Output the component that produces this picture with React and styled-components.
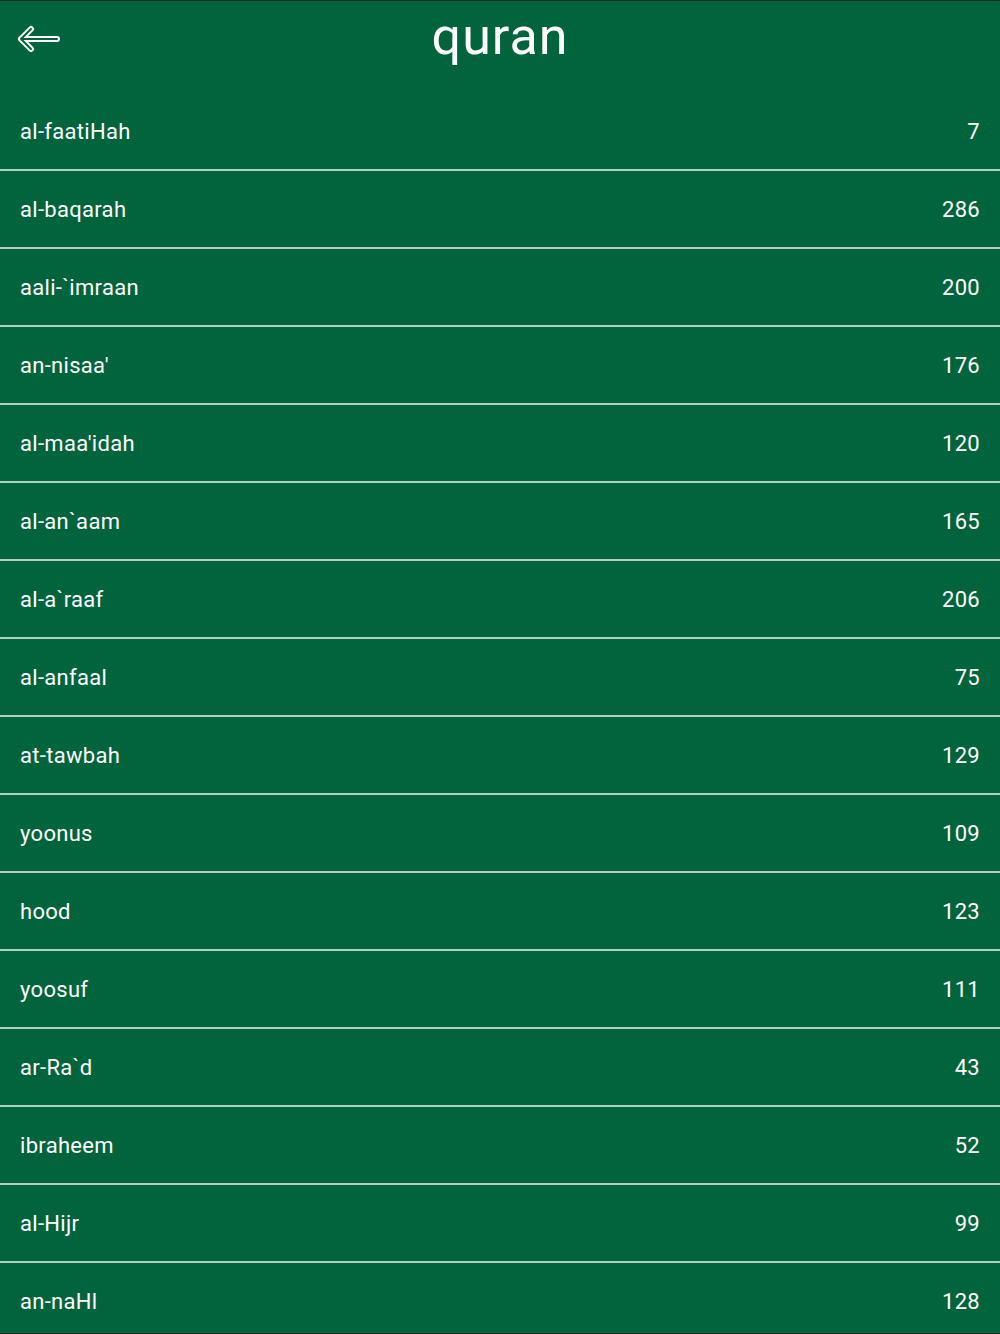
import React from 'react';
import styled, { createGlobalStyle } from 'styled-components';

const GlobalStyle = createGlobalStyle`
  html, body {
    margin: 0;
    padding: 0;
    background: #02643c;
  }
  body {
    font-family: Roboto, "Noto Sans", sans-serif;
  }
`;

const Page = styled.div`
  width: 1000px;
  height: 1334px;
  overflow: hidden;
  background: #02643c;
  border-top: 1px solid #0d2a1c;
  border-bottom: 1px solid #0d2a1c;
  box-sizing: border-box;
  display: flex;
  flex-direction: column;
`;

const Header = styled.header`
  height: 92px;
  padding-bottom: 16px;
  box-sizing: border-box;
  display: grid;
  grid-template-columns: 80px 1fr 80px;
  align-items: center;
  flex-shrink: 0;
`;

const BackButton = styled.button`
  background: none;
  border: none;
  padding: 0 0 0 17px;
  display: flex;
  align-items: center;
  cursor: pointer;
`;

const Title = styled.h1`
  margin: 0;
  text-align: center;
  color: #fff;
  font-size: 52px;
  font-weight: 400;
  letter-spacing: 1px;
  line-height: 1;
  padding-bottom: 4px;
`;

const List = styled.ul`
  list-style: none;
  margin: 0;
  padding: 0;
`;

const Row = styled.li`
  height: 76px;
  display: flex;
  align-items: center;
  justify-content: space-between;
  padding: 0 20px;
  border-bottom: 2px solid #b4d0bd;
  color: #fff;
  font-size: 22px;
  letter-spacing: 0.3px;

  &:last-child {
    border-bottom: none;
  }
`;

const Count = styled.span`
  text-align: right;
`;

const surahs = [
  ['al-faatiHah', 7],
  ['al-baqarah', 286],
  ['aali-`imraan', 200],
  ["an-nisaa'", 176],
  ["al-maa'idah", 120],
  ['al-an`aam', 165],
  ['al-a`raaf', 206],
  ['al-anfaal', 75],
  ['at-tawbah', 129],
  ['yoonus', 109],
  ['hood', 123],
  ['yoosuf', 111],
  ['ar-Ra`d', 43],
  ['ibraheem', 52],
  ['al-Hijr', 99],
  ['an-naHl', 128],
];

const BackArrow = () => (
  <svg width="44" height="28" viewBox="0 0 44 28">
    <g fill="none" strokeLinecap="round" strokeLinejoin="round">
      <path d="M40 14 H4 M14 4 L4 14 L14 24" stroke="#fff" strokeWidth="6" />
      <path d="M40 14 H4 M14 4 L4 14 L14 24" stroke="#02643c" strokeWidth="2" />
    </g>
  </svg>
);

export default function App() {
  return (
    <>
      <GlobalStyle />
      <Page>
        <Header>
          <BackButton aria-label="back">
            <BackArrow />
          </BackButton>
          <Title>quran</Title>
          <div />
        </Header>
        <List>
          {surahs.map(([name, ayat]) => (
            <Row key={name}>
              <span>{name}</span>
              <Count>{ayat}</Count>
            </Row>
          ))}
        </List>
      </Page>
    </>
  );
}
